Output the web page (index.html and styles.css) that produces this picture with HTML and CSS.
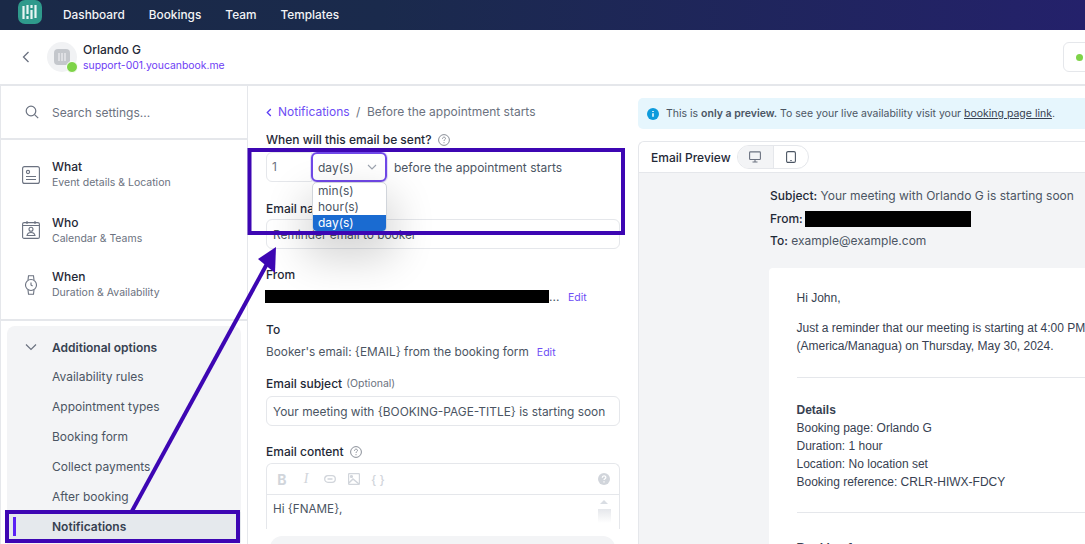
FILE: index.html
```html
<!DOCTYPE html>
<html lang="en">
<head>
<meta charset="utf-8">
<title>Notifications</title>
<link rel="stylesheet" href="styles.css">
</head>
<body>
<div class="page">
  <nav class="topbar">
    <svg class="logo" width="24" height="24" viewBox="0 0 24 24">
      <rect width="24" height="24" rx="7" fill="#2f9a8c"/>
      <g stroke="#e8f5f3" stroke-width="2.200">
        <path d="M5.500 6v13"/><path d="M9.500 5v9"/><path d="M9.500 16v3"/><path d="M13.500 5v3"/><path d="M13.500 10v9"/><path d="M17.500 5v13"/>
      </g>
    </svg>
    <a class="toplink">Dashboard</a>
    <a class="toplink">Bookings</a>
    <a class="toplink">Team</a>
    <a class="toplink">Templates</a>
  </nav>

  <header class="subhead">
    <svg class="back" width="10" height="14" viewBox="0 0 10 14"><path d="M7.500 2 2.500 7l5 5" fill="none" stroke="#6b7280" stroke-width="1.300"/></svg>
    <div class="avatar">
      <svg width="16" height="16" viewBox="0 0 16 16"><rect width="16" height="16" rx="4" fill="#c4c7cc"/><path d="M5 4v8M8 4v8M11 4v8" stroke="#e6e7ea" stroke-width="1.500"/></svg>
      <span class="status"></span>
    </div>
    <div class="who">
      <div class="who-name">Orlando G</div>
      <div class="who-link">support-001.youcanbook.me</div>
    </div>
    <div class="statusbtn"><span class="statusdot"></span></div>
  </header>

  <div class="columns">
    <aside class="sidebar">
      <div class="search">
        <svg width="14" height="14" viewBox="0 0 14 14" fill="none" stroke="#6b7280" stroke-width="1.200"><circle cx="6" cy="6" r="4.800"/><path d="m9.600 9.600 3.600 3.600"/></svg>
        <span>Search settings...</span>
      </div>
      <div class="mainnav">
        <div class="navitem">
          <svg width="18" height="18" viewBox="0 0 18 18" fill="none" stroke="#6b7280" stroke-width="1.100"><rect x=".6" y=".6" width="16.800" height="16.800" rx="2"/><circle cx="6" cy="6" r="1.600"/><path d="M4 10.500h10M4 13.500h10"/></svg>
          <div><div class="navtitle">What</div><div class="navsub">Event details &amp; Location</div></div>
        </div>
        <div class="navitem">
          <svg width="18" height="18" viewBox="0 0 18 18" fill="none" stroke="#6b7280" stroke-width="1.100"><rect x=".6" y="1.600" width="16.800" height="15.800" rx="1.500"/><path d="M.6 4.500h16.800M5 0v3M13 0v3"/><circle cx="9" cy="8.300" r="2"/><path d="M5 14.500c.5-2.500 2-3 4-3s3.500.5 4 3z"/></svg>
          <div><div class="navtitle">Who</div><div class="navsub">Calendar &amp; Teams</div></div>
        </div>
        <div class="navitem">
          <svg width="18" height="20" viewBox="0 0 18 20" fill="none" stroke="#6b7280" stroke-width="1.100"><circle cx="9" cy="10" r="5.500"/><path d="M6 5 6.500 .8h5L12 5M6 15l.5 4.200h5L12 15M9 7.500V10l1.600 1"/></svg>
          <div><div class="navtitle">When</div><div class="navsub">Duration &amp; Availability</div></div>
        </div>
      </div>
      <div class="addl">
        <div class="addl-head">
          <svg width="12" height="8" viewBox="0 0 12 8"><path d="m1 1.500 5 5 5-5" fill="none" stroke="#6b7280" stroke-width="1.200"/></svg>
          <span>Additional options</span>
        </div>
        <div class="addl-item">Availability rules</div>
        <div class="addl-item">Appointment types</div>
        <div class="addl-item">Booking form</div>
        <div class="addl-item">Collect payments</div>
        <div class="addl-item">After booking</div>
        <div class="addl-item active"><span class="indicator"></span>Notifications</div>
      </div>
    </aside>

    <main class="form">
      <div class="crumbs">
        <svg width="6" height="9" viewBox="0 0 6 9"><path d="M4.800 1 1.300 4.500 4.800 8" fill="none" stroke="#5b3df5" stroke-width="1.300"/></svg>
        <span class="crumb-link">Notifications</span><span class="crumb-sep">/</span><span>Before the appointment starts</span>
      </div>
      <div class="label when">When will this email be sent?
        <svg class="help" width="12" height="12" viewBox="0 0 12 12" fill="none" stroke="#8a8f98"><circle cx="6" cy="6" r="5.400"/><path d="M4.500 4.700c0-2 3-2 3-.2 0 1.100-1.500 1.100-1.500 2.400M6 8.200v1"/></svg>
      </div>
      <div class="timing">
        <div class="num">1</div>
        <div class="select">day(s)
          <svg width="10" height="6" viewBox="0 0 10 6"><path d="m1 1 4 4 4-4" fill="none" stroke="#9ca3af" stroke-width="1.100"/></svg>
        </div>
        <span class="timing-text">before the appointment starts</span>
      </div>
      <div class="label name-label">Email name</div>
      <div class="field muted-field">Reminder email to booker</div>
      <div class="label from-label">From</div>
      <div class="from-row"><span class="redact from-redact"></span><span class="dots">...</span><a class="edit">Edit</a></div>
      <div class="label to-label">To</div>
      <div class="to-row">Booker's email: {EMAIL} from the booking form<a class="edit">Edit</a></div>
      <div class="label subj-label">Email subject <span class="optional">(Optional)</span></div>
      <div class="field">Your meeting with {BOOKING-PAGE-TITLE} is starting soon</div>
      <div class="label content-label">Email content
        <svg class="help" width="12" height="12" viewBox="0 0 12 12" fill="none" stroke="#8a8f98"><circle cx="6" cy="6" r="5.400"/><path d="M4.500 4.700c0-2 3-2 3-.2 0 1.100-1.500 1.100-1.500 2.400M6 8.200v1"/></svg>
      </div>
      <div class="editor">
        <div class="tools">
          <span class="tool tool-b">B</span>
          <span class="tool tool-i">I</span>
          <span class="tool"><svg width="12" height="8" viewBox="0 0 12 8" fill="none" stroke="#d1d5db" stroke-width="1.300"><rect x=".7" y=".7" width="10.600" height="6.600" rx="3.300"/><path d="M3.500 4h5" stroke="#d1d5db"/></svg></span>
          <span class="tool"><svg width="12" height="12" viewBox="0 0 12 12" fill="none" stroke="#d1d5db" stroke-width="1.200"><rect x=".6" y=".6" width="10.800" height="10.800" rx=".6"/><path d="M.8 10 5 6l6 5" stroke-width="1.600"/><circle cx="3.500" cy="3.500" r="1" fill="#d1d5db"/></svg></span>
          <span class="tool tool-c">{ }</span>
          <svg class="tool-help" width="12" height="12" viewBox="0 0 12 12"><circle cx="6" cy="6" r="6" fill="#d1d5db"/><path d="M4.300 4.700c0-2.300 3.500-2.300 3.500-.2 0 1.200-1.800 1.200-1.800 2.600M6 8.200v1.200" fill="none" stroke="#fff" stroke-width="1.300"/></svg>
        </div>
        <div class="editor-body">
          <span>Hi {FNAME},</span>
          <div class="scroll"><span class="scroll-up"></span><span class="scroll-thumb"></span></div>
        </div>
      </div>
      <div class="savebar"></div>
    </main>

    <section class="preview">
      <div class="alert">
        <svg width="12" height="12" viewBox="0 0 12 12"><circle cx="6" cy="6" r="6" fill="#0e9bdc"/><path d="M6 5.200v3.600M6 2.900v1.200" stroke="#fff" stroke-width="1.500"/></svg>
        <span>This is <b>only a preview.</b> To see your live availability visit your <u>booking page link</u>.</span>
      </div>
      <div class="panel">
        <div class="panel-head">
          <span class="panel-title">Email Preview</span>
          <div class="toggle">
            <span class="toggle-btn on"><svg width="12" height="12" viewBox="0 0 12 12" fill="none" stroke="#6b7280" stroke-width="1.100"><rect x=".6" y=".9" width="10.800" height="7.600" rx=".8"/><path d="M6 8.500v2.300M3.500 11h5"/></svg></span>
            <span class="toggle-btn"><svg width="10" height="12" viewBox="0 0 10 12" fill="none" stroke="#4b5563" stroke-width="1.100"><rect x=".6" y=".6" width="8.800" height="10.800" rx="1.400"/><path d="M4.300 9.500h1.400"/></svg></span>
          </div>
        </div>
        <div class="panel-body">
          <div class="meta"><b>Subject:</b> Your meeting with Orlando G is starting soon</div>
          <div class="meta meta-from"><b>From:</b><span class="redact meta-redact"></span></div>
          <div class="meta"><b>To:</b> example@example.com</div>
          <article class="mail">
            <p class="m-hi">Hi John,</p>
            <p class="m-p">Just a reminder that our meeting is starting at 4:00 PM<br>(America/Managua) on Thursday, May 30, 2024.</p>
            <hr class="m-hr first">
            <p class="m-details"><b>Details</b><br>Booking page: Orlando G<br>Duration: 1 hour<br>Location: No location set<br>Booking reference: CRLR-HIWX-FDCY</p>
            <hr class="m-hr second">
            <p class="m-more"><b>Booking form</b></p>
          </article>
        </div>
      </div>
    </section>
  </div>

  <div class="dropdown">
    <div class="opt">min(s)</div>
    <div class="opt">hour(s)</div>
    <div class="opt sel">day(s)</div>
  </div>

  <svg class="overlay" width="1085" height="544" viewBox="0 0 1085 544">
    <g fill="none" stroke="#3d06b3" stroke-width="4">
      <rect x="249.500" y="150" width="373.500" height="83"/>
      <rect x="7" y="512" width="231" height="29"/>
      <path d="M132 511 268 262"/>
    </g>
    <path d="M276 247 258 259 275 273z" fill="#3d06b3"/>
  </svg>
</div>
</body>
</html>
```
FILE: styles.css
```css
* { box-sizing: border-box; }
html, body { margin: 0; padding: 0; }
body { font-family: Inter, "Liberation Sans", sans-serif; color: #4b5563; background: #fff; }
.page { position: relative; width: 1085px; height: 544px; overflow: hidden; display: flex; flex-direction: column; }

.topbar { height: 30px; flex: none; display: flex; align-items: center; gap: 24px; padding-left: 18px; background: linear-gradient(90deg, #1a2947 0%, #1a2a4c 35%, #24216b 100%); overflow: hidden; }
.logo { margin-right: -3px; align-self: flex-start; }
.toplink { color: #f3f4f6; font-size: 11.850px; font-weight: 500; }

.subhead { height: 56px; flex: none; display: flex; align-items: center; padding-left: 21px; border-bottom: 2px solid #e5e7eb; position: relative; }
.back { margin-right: 16px; }
.avatar { position: relative; width: 30px; height: 30px; border-radius: 50%; background: #f1f2f4; display: flex; align-items: center; justify-content: center; margin-right: 6px; }
.status { position: absolute; right: -1px; bottom: -1px; width: 12px; height: 12px; border-radius: 50%; background: #7ed348; border: 1px solid #fff; }
.who-name { font-size: 12px; font-weight: 500; color: #1f2937; line-height: 16px; }
.who-link { font-size: 10.400px; color: #6d3df5; line-height: 15px; }
.statusbtn { margin-left: auto; margin-right: -10px; width: 32px; height: 30px; border: 1px solid #e5e7eb; border-radius: 6px; padding: 11px 0 0 12px; }
.statusdot { display: block; width: 7px; height: 7px; border-radius: 50%; background: #7ed348; }

.columns { flex: 1; min-height: 0; display: grid; grid-template-columns: 248px 390px 447px; }

.sidebar { border-left: 1px solid #e5e7eb; border-right: 1px solid #e5e7eb; min-height: 0; overflow: hidden; }
.search { height: 54px; display: flex; align-items: center; gap: 13px; padding-left: 24px; border-bottom: 2px solid #e5e7eb; font-size: 12px; color: #6b7280; }
.mainnav { height: 181px; padding-top: 6px; border-bottom: 2px solid #e5e7eb; }
.navitem { height: 54.500px; display: flex; align-items: center; gap: 12px; padding: 0 0 0 21px; }
.navitem:first-child { height: 57px; }
.navtitle { font-size: 12px; font-weight: 500; color: #1f2937; line-height: 15px; }
.navsub { font-size: 10.500px; color: #6b7280; line-height: 15px; margin-top: 1px; }
.addl { margin: 5px 6px 0; background: #f3f4f6; border-radius: 8px 8px 0 0; height: 230px; padding-top: 6px; }
.addl-head { height: 30px; display: flex; align-items: center; gap: 15px; padding-left: 18px; font-size: 12px; font-weight: 600; color: #374151; }
.addl-item { height: 30px; padding-left: 45px; font-size: 12px; line-height: 30px; color: #4b5563; position: relative; }
.addl-item.active { background: #e5e9ed; color: #374151; font-weight: 600; }
.indicator { position: absolute; left: 6px; top: 5px; width: 3px; height: 19px; background: #5b21f5; }

.form { padding: 17px 18px 0 18px; min-height: 0; overflow: hidden; position: relative; }
.crumbs { display: flex; align-items: center; font-size: 12px; line-height: 18px; color: #6b7280; height: 18px; }
.crumbs svg { margin-right: 6px; }
.crumb-link { color: #6d4df5; }
.crumb-sep { margin: 0 6.500px; }
.label { font-size: 12px; font-weight: 500; color: #1f2937; line-height: 16px; display: flex; align-items: center; }
.help { margin-left: 6px; }
.when { margin-top: 11px; }
.timing { display: flex; align-items: center; margin-top: 4px; height: 30px; font-size: 12px; }
.num { width: 46px; height: 30px; border: 1px solid #e5e7eb; border-radius: 6px 0 0 6px; padding-left: 5px; line-height: 28px; color: #6b7280; }
.select { width: 76px; height: 30px; margin-left: -1px; border: 2px solid #7048e8; border-radius: 6px; box-shadow: 0 0 0 1px #e1dcfb; display: flex; align-items: center; justify-content: space-between; padding: 0 8px 0 5px; position: relative; }
.timing-text { margin-left: 7px; }
.name-label { margin-top: 19px; }
.field { height: 30px; border: 1px solid #e5e7eb; border-radius: 6px; padding-left: 6px; font-size: 11.900px; line-height: 29px; color: #4b5563; }
.name-label + .field { margin-top: 2px; }
.from-label { margin-top: 18px; }
.from-row { margin-top: 6px; display: flex; align-items: center; height: 14px; font-size: 12px; }
.from-row .edit { padding-top: 2px; }
.redact { display: block; background: #000; }
.from-redact { width: 284px; height: 13px; margin-left: -1px; }
.dots { color: #4b5563; width: 19px; }
.edit { color: #6d4df5; font-size: 10.500px; }
.to-label { margin-top: 19px; }
.to-row { margin-top: 6px; font-size: 11.820px; line-height: 16px; }
.to-row .edit { margin-left: 8px; }
.subj-label { margin-top: 15px; }
.optional { font-size: 10.500px; font-weight: 400; color: #6b7280; margin-left: 4px; }
.subj-label + .field { margin-top: 4px; }
.content-label { margin-top: 18px; }
.editor { margin-top: 3px; height: 66px; border: 1px solid #e5e7eb; border-radius: 6px 6px 0 0; border-bottom: 0; overflow: hidden; }
.tools { height: 31px; border-bottom: 1px solid #e5e7eb; display: flex; align-items: center; padding: 0 9px 0 3px; color: #d1d5db; }
.tool { width: 24px; display: flex; align-items: center; justify-content: center; }
.tool-b { font-size: 14px; font-weight: 700; }
.tool-i { font-size: 14px; font-family: "Liberation Serif", serif; font-style: italic; }
.tool-c { font-size: 12px; font-weight: 500; }
.tool-help { margin-left: auto; }
.editor-body { position: relative; padding: 6px 6px; font-size: 11.700px; line-height: 16px; display: flex; justify-content: space-between; }
.scroll { width: 14px; margin-right: 2px; display: flex; flex-direction: column; align-items: center; }
.scroll-up { width: 0; height: 0; border: 4px solid transparent; border-top: 0; border-bottom-color: #d9dde3; margin-bottom: 5px; margin-top: -1px; }
.scroll-thumb { width: 13px; height: 14px; background: linear-gradient(#e5e7eb, #fff); }
.savebar { margin: 7px 5px 0 4px; height: 24px; background: #f3f4f6; border-radius: 12px; }

.dropdown { position: absolute; left: 312px; top: 182px; width: 75px; border-radius: 5px; border: 1px solid #d1d5db; background: #fff; overflow: hidden; font-size: 12px; line-height: 16px; color: #4b5563; box-shadow: 0 20px 40px 8px rgba(0,0,0,.16); }
.opt { padding-left: 5px; }
.opt.sel { background: #1a6bd1; color: #fff; }

.preview { padding-top: 12px; min-width: 0; overflow: hidden; }
.alert { height: 31px; background: #e6f6fd; border-radius: 5px 0 0 5px; display: flex; align-items: center; gap: 7px; padding-left: 9px; font-size: 10.500px; color: #4b5563; }
.alert u { color: #374151; }
.alert b { font-weight: 600; }
.panel { margin-top: 12px; border: 1px solid #e5e7eb; border-right: 0; border-bottom: 0; border-radius: 6px 0 0 0; height: 404px; }
.panel-head { height: 31px; display: flex; align-items: center; padding-left: 12px; gap: 6px; border-bottom: 1px solid #e5e7eb; }
.panel-title { font-size: 12px; font-weight: 500; color: #1f2937; }
.toggle { display: flex; height: 24px; border: 1px solid #e5e7eb; border-radius: 12px; overflow: hidden; }
.toggle-btn { width: 34px; display: flex; align-items: center; justify-content: center; }
.toggle-btn.on { background: #f3f4f6; border-right: 1px solid #e5e7eb; width: 36px; }
.panel-body { background: #f3f4f6; height: 372px; padding: 15px 0 0 131px; }
.meta { font-size: 12px; line-height: 16px; margin-bottom: 6.500px; color: #4b5563; }
.meta b { font-weight: 500; color: #1f2937; }
.meta-from { display: flex; align-items: center; gap: 2px; height: 16px; }
.meta-redact { width: 166px; height: 16px; }
.mail { margin: 19px 0 0 -1px; background: #fff; border-radius: 4px 0 0 0; height: 300px; padding: 21px 0 0 27.500px; font-family: "Liberation Sans", Arial, sans-serif; font-size: 12px; line-height: 18px; color: #374151; overflow: hidden; }
.mail p { margin: 0; }
.mail .m-p { margin-top: 12px; white-space: nowrap; }
.m-hr { border: 0; border-top: 1px solid #e5e7eb; margin: 0; }
.first { margin-top: 22px; }
.mail .m-details { margin-top: 23px; }
.second { margin-top: 21px; }
.mail .m-more { margin-top: 26px; }

.overlay { position: absolute; left: 0; top: 0; pointer-events: none; }
```
